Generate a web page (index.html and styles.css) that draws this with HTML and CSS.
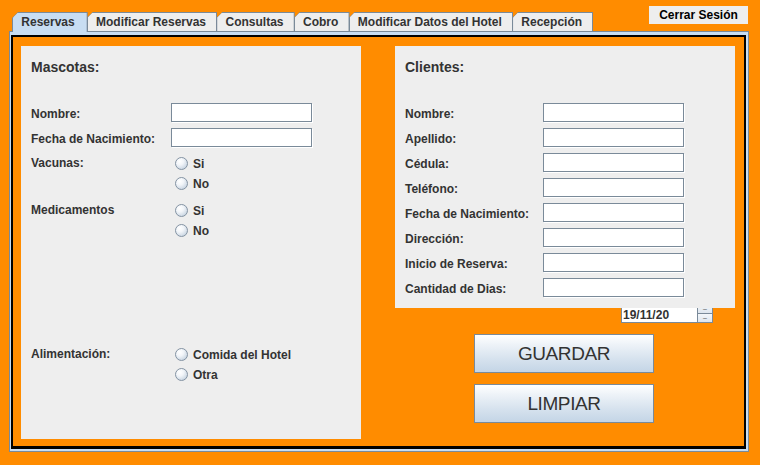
FILE: index.html
```html
<!DOCTYPE html>
<html lang="es">
<head>
<meta charset="utf-8">
<title>Reservas</title>
<link rel="stylesheet" href="styles.css">
</head>
<body>
<div class="header">
  <div class="tabs">
    <div class="tab active"><span class="tab-in">Reservas</span></div>
    <div class="tab"><span class="tab-in">Modificar Reservas</span></div>
    <div class="tab"><span class="tab-in">Consultas</span></div>
    <div class="tab"><span class="tab-in">Cobro</span></div>
    <div class="tab"><span class="tab-in">Modificar Datos del Hotel</span></div>
    <div class="tab"><span class="tab-in">Recepción</span></div>
  </div>
  <button class="logout">Cerrar Sesión</button>
</div>
<div class="pane">
  <div class="content">
    <section class="panel panel-left">
      <h2 class="title">Mascotas:</h2>
      <div class="row field-row"><span class="lbl">Nombre:</span><span class="input"></span></div>
      <div class="row field-row"><span class="lbl">Fecha de Nacimiento:</span><span class="input"></span></div>
      <div class="row radio-row vacunas">
        <span class="lbl">Vacunas:</span>
        <div class="radios">
          <label class="radio"><span class="dot"></span>Si</label>
          <label class="radio"><span class="dot"></span>No</label>
        </div>
      </div>
      <div class="row radio-row medic">
        <span class="lbl">Medicamentos</span>
        <div class="radios">
          <label class="radio"><span class="dot"></span>Si</label>
          <label class="radio"><span class="dot"></span>No</label>
        </div>
      </div>
      <div class="row radio-row alim">
        <span class="lbl">Alimentación:</span>
        <div class="radios">
          <label class="radio"><span class="dot"></span>Comida del Hotel</label>
          <label class="radio"><span class="dot"></span>Otra</label>
        </div>
      </div>
    </section>
    <div class="right-col">
      <section class="panel panel-right">
        <h2 class="title">Clientes:</h2>
        <div class="row field-row"><span class="lbl">Nombre:</span><span class="input"></span></div>
        <div class="row field-row"><span class="lbl">Apellido:</span><span class="input"></span></div>
        <div class="row field-row"><span class="lbl">Cédula:</span><span class="input"></span></div>
        <div class="row field-row"><span class="lbl">Teléfono:</span><span class="input"></span></div>
        <div class="row field-row"><span class="lbl">Fecha de Nacimiento:</span><span class="input"></span></div>
        <div class="row field-row"><span class="lbl">Dirección:</span><span class="input"></span></div>
        <div class="row field-row"><span class="lbl">Inicio de Reserva:</span><span class="input"></span></div>
        <div class="row field-row"><span class="lbl">Cantidad de Dias:</span><span class="input"></span></div>
      </section>
      <div class="spinner">
        <span class="spin-field">19/11/20</span>
        <span class="spin-btns">
          <span class="spin-btn">&#x2013;</span>
          <span class="spin-btn">&#x2013;</span>
        </span>
      </div>
      <button class="big-btn first">GUARDAR</button>
      <button class="big-btn">LIMPIAR</button>
    </div>
  </div>
</div>
</body>
</html>
```
FILE: styles.css
```css
* { box-sizing: border-box; }
html, body { margin: 0; padding: 0; }
body {
  width: 760px;
  height: 465px;
  overflow: hidden;
  background: #ff8c00;
  font-family: "Liberation Sans", Arial, sans-serif;
  font-size: 12px;
  color: #333333;
}

/* header */
.header {
  height: 31px;
  display: flex;
  align-items: flex-start;
}
.tabs {
  display: flex;
  align-items: flex-end;
  align-self: flex-end;
  margin-left: 12px;
  height: 19px;
}
.tab {
  height: 19px;
  background: #7a8a99;
  padding: 1px 1px 0 1px;
  clip-path: polygon(0 6px, 6px 0, 100% 0, 100% 100%, 0 100%);
  margin-left: -1px;
}
.tab:first-child { margin-left: 0; }
.tab-in {
  display: block;
  height: 100%;
  background: #eeeeee;
  clip-path: polygon(0 4.4px, 4.4px 0, 100% 0, 100% 100%, 0 100%);
  font-weight: bold;
  font-size: 12px;
  line-height: 18px;
  padding: 0 10.2px 0 8.3px;
  color: #333333;
  white-space: nowrap;
}
.tab.active {
  height: 20px;
  margin-bottom: -1px;
  position: relative;
  z-index: 2;
  padding-bottom: 0;
}
.tab.active .tab-in {
  background: #c8ddf2;
  padding-right: 12px;
}
.logout {
  appearance: none;
  margin: 6px 12px 0 auto;
  width: 99px;
  height: 18px;
  border: none;
  background: #eeeeee;
  font-family: "Liberation Sans", Arial, sans-serif;
  font-weight: bold;
  font-size: 12px;
  color: #000;
  padding: 0;
  line-height: 18px;
}

/* tab pane */
.pane {
  margin-left: 9px;
  width: 740px;
  height: 421px;
  border: 1px solid #7a8a99;
  background: #c8ddf2;
  padding: 3px 2px 2px 1px;
}
.content {
  height: 100%;
  border: 2px solid #000;
  border-bottom-width: 3px;
  background: #ff8c00;
  padding: 9px 8px;
  display: grid;
  grid-template-columns: 340px 340px;
  column-gap: 34px;
  align-items: start;
}

.panel {
  background: #eeeeee;
  padding: 11px 10px 0 10px;
  position: relative;
  z-index: 1;
}
.panel-left { height: 393px; }
.panel-right { height: 262px; }

.title {
  margin: 0 0 26px 0;
  font-size: 14px;
  line-height: 20px;
  font-weight: bold;
  color: #333333;
}

.row { display: flex; }
.field-row {
  height: 19px;
  align-items: flex-start;
  margin-bottom: 6px;
}
.lbl {
  font-weight: bold;
  font-size: 12px;
  color: #333333;
  white-space: nowrap;
}
.panel-left .lbl { width: 140px; }
.panel-right .lbl { width: 138px; }
.field-row .lbl { line-height: 23px; height: 19px; }
.input {
  width: 141px;
  height: 19px;
  background: #fff;
  border: 1px solid #7a8a99;
  box-shadow: 1px 1px 0 #ffffff;
}

.radio-row { align-items: flex-start; }
.radio-row .lbl { line-height: 21px; }
.medic { margin-top: 7px; }
.alim { margin-top: 104px; }
.radios {
  display: flex;
  flex-direction: column;
  margin-left: 4px;
}
.radio {
  display: flex;
  align-items: center;
  height: 20px;
  font-weight: bold;
  font-size: 12px;
  line-height: 20px;
  padding-top: 1px;
  color: #333333;
}
.dot {
  width: 13px;
  height: 13px;
  border-radius: 50%;
  border: 1px solid #8493a3;
  background: radial-gradient(circle at 35% 30%, #ffffff 0%, #f2f5f9 35%, #c9d5e2 80%, #b4c3d3 100%);
  margin-right: 5px;
}

/* right column */
.right-col {
  position: relative;
  display: flex;
  flex-direction: column;
}
.spinner {
  position: absolute;
  left: 226px;
  top: 258px;
  height: 19px;
  display: flex;
  z-index: 0;
}
.spin-field {
  width: 76px;
  height: 19px;
  background: #fff;
  border: 1px solid #7a8a99;
  border-right: none;
  font-weight: bold;
  font-size: 12px;
  line-height: 17px;
  padding: 2px 0 0 1px;
  color: #333333;
}
.spin-btns {
  width: 16px;
  height: 19px;
  display: flex;
  flex-direction: column;
  border: 1px solid #7a8a99;
  background: #7a8a99;
  gap: 1px;
}
.spin-btn {
  flex: 1;
  background: linear-gradient(#f4f7fa, #dde5ee);
  font-size: 7px;
  line-height: 8px;
  text-align: center;
  color: #555;
}

.big-btn {
  width: 180px;
  height: 39px;
  margin: 11px 0 0 79px;
  border: 1px solid #7a8a99;
  background: linear-gradient(#ffffff 0%, #eef3f8 25%, #d6e2ee 65%, #c4d5e6 100%);
  font-family: "Liberation Sans", Arial, sans-serif;
  font-size: 19px;
  letter-spacing: -0.4px;
  color: #333333;
  padding: 0;
}
.big-btn.first { margin-top: 26px; }
```
